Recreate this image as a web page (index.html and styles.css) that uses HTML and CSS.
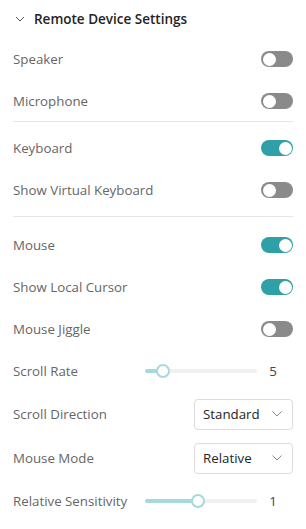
FILE: index.html
```html
<!DOCTYPE html>
<html>
<head>
<meta charset="utf-8">
<link rel="stylesheet" href="styles.css">
</head>
<body>
<div class="panel">
  <div class="header">
    <svg class="hchev" width="10" height="6" viewBox="0 0 10 6"><path d="M1 1 L5 5 L9 1" fill="none" stroke="#555" stroke-width="1"/></svg>
    <span class="htitle">Remote Device Settings</span>
  </div>

  <div class="section first">
    <div class="row"><span class="label">Speaker</span><span class="toggle"></span></div>
    <div class="row"><span class="label">Microphone</span><span class="toggle"></span></div>
  </div>

  <div class="section">
    <div class="row"><span class="label">Keyboard</span><span class="toggle on"></span></div>
    <div class="row"><span class="label">Show Virtual Keyboard</span><span class="toggle"></span></div>
  </div>

  <div class="section last">
    <div class="row"><span class="label">Mouse</span><span class="toggle on"></span></div>
    <div class="row"><span class="label">Show Local Cursor</span><span class="toggle on"></span></div>
    <div class="row"><span class="label">Mouse Jiggle</span><span class="toggle"></span></div>
    <div class="row">
      <span class="label">Scroll Rate</span>
      <div class="slider"><div class="fill" style="width:18px"></div><div class="thumb" style="left:18px"></div></div>
      <span class="value">5</span>
    </div>
    <div class="row tall">
      <span class="label">Scroll Direction</span>
      <div class="select"><span>Standard</span><svg width="10" height="6" viewBox="0 0 10 6"><path d="M0.5 0.5 L5 5 L9.5 0.5" fill="none" stroke="#8a8a8a" stroke-width="1"/></svg></div>
    </div>
    <div class="row tall">
      <span class="label">Mouse Mode</span>
      <div class="select"><span>Relative</span><svg width="10" height="6" viewBox="0 0 10 6"><path d="M0.5 0.5 L5 5 L9.5 0.5" fill="none" stroke="#8a8a8a" stroke-width="1"/></svg></div>
    </div>
    <div class="row">
      <span class="label">Relative Sensitivity</span>
      <div class="slider"><div class="fill" style="width:53px"></div><div class="thumb" style="left:53px"></div></div>
      <span class="value">1</span>
    </div>
  </div>
</div>
</body>
</html>
```

FILE: styles.css
```css
html, body {
  margin: 0;
  padding: 0;
  background: #ffffff;
}
body {
  font-family: "Open Sans", "Noto Sans", sans-serif;
  font-size: 13.3px;
  color: #666666;
}
.panel {
  width: 306px;
  padding: 0 13px;
  box-sizing: border-box;
}
.header {
  height: 38px;
  display: flex;
  align-items: center;
  padding-left: 2px;
}
.hchev {
  margin-right: 9px;
}
.htitle {
  font-weight: 600;
  font-size: 13.5px;
  color: #242424;
}
.section {
  border-top: 1px solid #e6e6e6;
  padding: 5px 0;
}
.section.first {
  border-top: none;
  padding: 0;
  margin-bottom: -1px;
}
.section.last {
  padding-top: 7px;
}
.row {
  height: 42px;
  display: flex;
  align-items: center;
}
.row.tall {
  height: 44px;
}
.label {
  flex: 1;
}
.toggle {
  position: relative;
  width: 32px;
  height: 16px;
  border-radius: 8px;
  background: #8a8a8a;
}
.toggle::after {
  content: "";
  position: absolute;
  top: 1.5px;
  left: 1.5px;
  width: 13px;
  height: 13px;
  border-radius: 50%;
  background: #ffffff;
}
.toggle.on {
  background: #2fa0a8;
}
.toggle.on::after {
  left: auto;
  right: 1.5px;
}
.slider {
  position: relative;
  width: 112px;
  height: 4px;
  border-radius: 2px;
  background: #f0f0f0;
}
.fill {
  height: 4px;
  border-radius: 2px;
  background: #a6d9db;
}
.thumb {
  position: absolute;
  top: -5px;
  width: 14px;
  height: 14px;
  margin-left: -7px;
  box-sizing: border-box;
  border: 2px solid #a6d9db;
  border-radius: 50%;
  background: #ffffff;
}
.value {
  width: 36px;
  padding-right: 4px;
  box-sizing: border-box;
  text-align: center;
  color: #444;
}
.select {
  width: 99px;
  height: 31px;
  box-sizing: border-box;
  border: 1px solid #dcdcdc;
  border-radius: 4px;
  display: flex;
  align-items: center;
  justify-content: space-between;
  padding: 0 10px 0 8px;
  color: #242424;
}
```
